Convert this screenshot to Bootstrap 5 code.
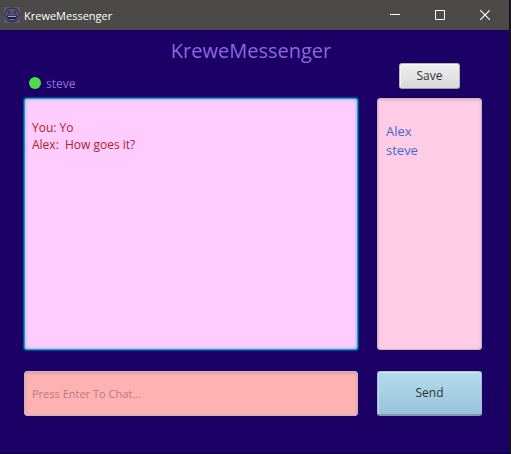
<!DOCTYPE html>
<html lang="en">
<head>
<meta charset="utf-8">
<meta name="viewport" content="width=device-width, initial-scale=1">
<title>KreweMessenger</title>
<link href="https://cdn.jsdelivr.net/npm/bootstrap@5.3.0/dist/css/bootstrap.min.css" rel="stylesheet">
<style>
body { font: 12px/17px "Open Sans", "Noto Sans", sans-serif; background: #1b0066; }
.app-window { border-right: 2px solid #16161a; border-bottom: 1px solid #0d0330; }
.titlebar { height: 30px; background: #4c4a48; color: #fff; padding-right: 2px; }
.titlebar-name { font-size: 11px; }
.win-btn { width: 45px; height: 30px; border: 0; background: none; color: #fff; }
.app-heading { font-size: 20px; line-height: 33px; height: 33px; padding-top: 4px; padding-right: 4px; font-weight: 400; color: #8b68dc; }
.app-main { padding: 0 27px 37px 24px; }
.chat-grid { display: grid; grid-template-columns: minmax(0, 334fr) minmax(0, 105fr); grid-template-rows: 35px minmax(120px, 1fr) auto; column-gap: 19px; }
.status-line { color: #9370db; gap: 5px; padding: 12px 0 7px 5px; }
.status-dot { width: 12px; height: 12px; border-radius: 50%; background: #4ddb4d; }
.fx-btn { border: 1px solid #b5b5ba; border-bottom-color: #9a9aa4; border-radius: 3px; color: #333; font-size: 12px; line-height: 16px; }
.save-btn { width: 61px; height: 26px; background: linear-gradient(#efefef, #d9d9d9); box-shadow: inset 0 1px #fbfbfb, inset 1px 0 #f4f4f4; }
.send-btn { background: linear-gradient(#b2dcec, #9bc3d8); border-color: #a3c0d3; border-bottom: 2px solid #8199b5; box-shadow: inset 0 1px #d2edf5, inset 1px 0 #bcdfec; }
.fx-box { border: 1px solid #c8b8bf; border-radius: 3px; box-shadow: inset 0 1px 3px rgba(70, 40, 70, .2); }
.chat-log { background: #ffccff; color: #b22222; border: 1px solid #039ed3; box-shadow: 0 0 1px 1px #07579a, inset 0 0 3px 1px rgba(60, 120, 180, .3); padding: 20px 7px; resize: none; outline: 0; }
.user-list { background: #ffcce6; color: #4169cd; font-size: 13px; line-height: 19px; padding: 23px 8px; }
.compose-row { margin-top: 21px; }
.chat-entry { background: #ffb2b2; color: #802020; padding: 0 7px; height: 45px; font-size: 11px; }
.chat-entry::placeholder { color: #b77c7f; opacity: 1; }
</style>
<script src="https://cdn.jsdelivr.net/npm/bootstrap@5.3.0/dist/js/bootstrap.bundle.min.js"></script>
</head>
<body>
<div class="app-window min-vh-100 d-flex flex-column">
  <header class="titlebar d-flex align-items-center flex-shrink-0">
    <svg class="mx-1" width="16" height="16" viewBox="0 0 16 16" aria-hidden="true">
      <path fill="#5a567b" d="M0 0h16v16H0z"/>
      <circle cx="8" cy="8" r="7" fill="none" stroke="#29243f"/>
      <path d="M3 3.5l3.500 1.700M13 3.500L9.500 5.200" fill="none" stroke="#29243f"/>
      <path d="M3.500 7q1.500-2 3 0M9.500 7q1.500-2 3 0" fill="none" stroke="#29243f"/>
      <path d="M3 8.500h10c0 7-10 7-10 0z" fill="#211c34"/>
      <path d="M4 9.500h8" stroke="#a7a3be"/>
      <path d="M5.500 12.500h5" stroke="#77739a"/>
    </svg>
    <span class="titlebar-name me-auto">KreweMessenger</span>
    <button type="button" class="win-btn p-0 d-flex align-items-center justify-content-center" aria-label="Minimize"><svg width="10" height="10"><path d="M0 4.500h10" stroke="currentColor"/></svg></button>
    <button type="button" class="win-btn p-0 d-flex align-items-center justify-content-center" aria-label="Maximize"><svg width="10" height="10"><path d="M.5.5h9v9h-9z" fill="none" stroke="currentColor"/></svg></button>
    <button type="button" class="win-btn p-0 d-flex align-items-center justify-content-center" aria-label="Close"><svg width="10" height="10"><path d="M0 0l10 10M10 0L0 10" stroke="currentColor" stroke-width="1.200"/></svg></button>
  </header>
  <main class="app-main flex-grow-1 d-flex flex-column">
    <h1 class="app-heading text-center m-0">KreweMessenger</h1>
    <form class="chat-grid flex-grow-1">
      <div class="status-line d-flex align-items-center">
        <span class="status-dot"></span><span>steve</span>
      </div>
      <div class="text-center"><button type="button" class="fx-btn save-btn p-0">Save</button></div>
      <textarea class="fx-box chat-log w-100 h-100" readonly aria-label="Conversation">You: Yo
Alex:  How goes it?</textarea>
      <ul class="fx-box user-list list-unstyled m-0" aria-label="Users">
        <li>Alex</li>
        <li>steve</li>
      </ul>
      <input type="text" class="fx-box chat-entry compose-row w-100" placeholder="Press Enter To Chat..." aria-label="Message">
      <button type="button" class="fx-btn send-btn compose-row p-0">Send</button>
    </form>
  </main>
</div>
</body>
</html>
